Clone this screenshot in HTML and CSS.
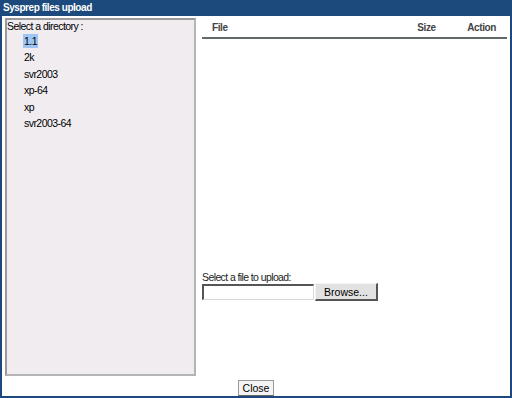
FILE: index.html
```html
<!DOCTYPE html>
<html lang="en">

<head>
    <meta charset="UTF-8">
    <title>Sysprep files upload</title>
    <link rel="stylesheet" href="styles.css">
</head>

<body>
    <div class="dialog">
        <div class="titlebar">Sysprep files upload</div>
        <div class="content">
            <div class="dirs">
                <div class="dirs_title">Select a directory :</div>
                <ul>
                    <li><span class="selected">1.1</span></li>
                    <li><span>2k</span></li>
                    <li><span>svr2003</span></li>
                    <li><span>xp-64</span></li>
                    <li><span>xp</span></li>
                    <li><span>svr2003-64</span></li>
                </ul>
            </div>
            <div class="files">
                <table class="list">
                    <thead>
                        <tr>
                            <th class="col_file">File</th>
                            <th class="col_size">Size</th>
                            <th class="col_action">Action</th>
                        </tr>
                    </thead>
                </table>
                <div class="upload">
                    <label for="file">Select a file to upload:</label>
                    <div class="upload_row">
                        <input type="text" id="file">
                        <button class="browse">Browse...</button>
                    </div>
                </div>
            </div>
        </div>
        <div class="bottom">
            <button class="close">Close</button>
        </div>
    </div>
</body>

</html>
```

FILE: styles.css
```css
body {
    margin: 0;
    font: 10.5px "Liberation Sans", Arial, sans-serif;
    letter-spacing: -0.55px;
    color: #000;
}

.dialog {
    width: 512px;
    height: 398px;
    box-sizing: border-box;
    border: 2px solid #1c4a7c;
    border-top: none;
    display: flex;
    flex-direction: column;
    background: #fff;
}

.titlebar {
    height: 16px;
    margin: 0 -2px;
    padding-left: 3px;
    background: #1c4a7c;
    color: #fff;
    font-size: 10px;
    font-weight: bold;
    letter-spacing: -0.45px;
    line-height: 16px;
}

.content {
    display: flex;
    padding: 2px 0 0 3px;
    height: 360px;
}

/* 左侧目录列表 */
.dirs {
    width: 191px;
    box-sizing: border-box;
    border: 2px solid #b4b4b4;
    border-top-color: #9a9a9a;
    border-left-color: #9a9a9a;
    background: #f0ecf0;
}

.dirs_title {
    line-height: 13px;
}

.dirs ul {
    margin: 0;
    padding: 0 0 0 16px;
    list-style: none;
}

.dirs li {
    height: 16.4px;
    line-height: 16px;
}

.dirs li span {
    padding: 1px 1px;
}

.dirs .selected {
    background: #9fc6f2;
}

/* 右侧文件区域 */
.files {
    flex: 1;
    margin-left: 6px;
    margin-right: 3px;
    display: flex;
    flex-direction: column;
}

.list {
    width: 100%;
    border-collapse: collapse;
}

.list th {
    font-size: 10px;
    font-weight: bold;
    color: #444;
    text-align: left;
    letter-spacing: -0.4px;
    padding: 4px 0 3px;
    border-bottom: 2px solid #606a66;
    line-height: 12px;
}

.col_file {
    padding-left: 10px !important;
}

.col_size {
    width: 50px;
}

.col_action {
    width: 28px;
    padding-right: 11px !important;
}

.upload {
    margin-top: 232px;
}

.upload label {
    display: block;
    line-height: 12px;
    letter-spacing: -0.6px;
    color: #222;
}

.upload_row {
    display: flex;
    align-items: center;
    margin-top: 0;
}

.upload_row input {
    width: 112px;
    height: 16px;
    box-sizing: border-box;
    margin: 0;
    padding: 0;
    border: 1px solid #d8d8d8;
    border-top: 2px solid #555;
    border-left: 2px solid #555;
    background: #fff;
}

.browse {
    margin-left: 1px;
    width: 63px;
    height: 18px;
    padding: 0;
    font: 10.5px "Liberation Sans", Arial, sans-serif;
    background: #e2e2e2;
    border: 1px solid #f4f4f4;
    border-right: 2px solid #555;
    border-bottom: 2px solid #555;
}

.bottom {
    display: flex;
    justify-content: center;
    padding-top: 4px;
}

.close {
    height: 16px;
    width: 36px;
    padding: 0;
    font: 10.5px "Liberation Sans", Arial, sans-serif;
    line-height: 12px;
    background: #f4f4f4;
    border: 1px solid #9a9a9a;
    border-bottom-color: #666;
}
```
